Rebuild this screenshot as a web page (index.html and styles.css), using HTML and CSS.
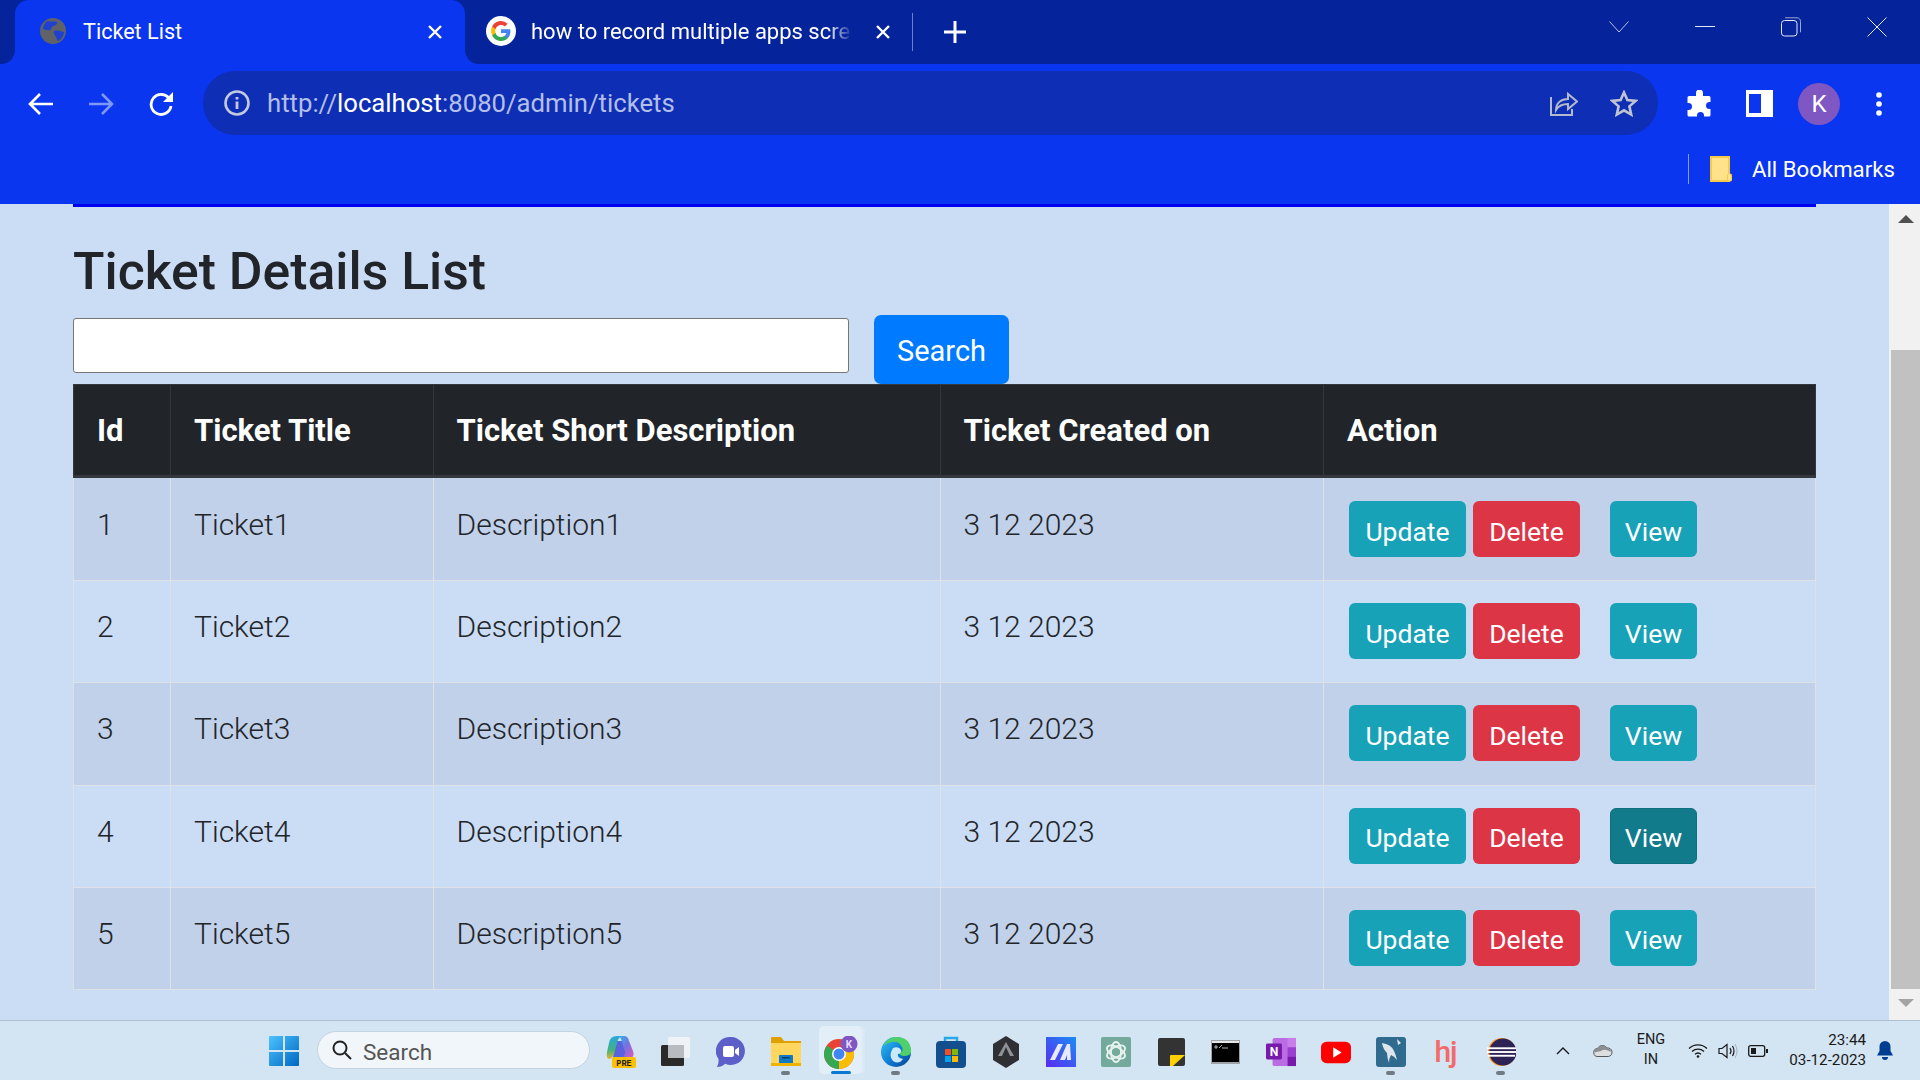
FILE: index.html
```html
<!DOCTYPE html>
<html lang="en">
<head>
<meta charset="utf-8">
<title>Ticket List</title>
<link rel="stylesheet" href="styles.css">
</head>
<body>
<header class="browser">
  <div class="tabstrip">
    <div class="strip-left"></div>
    <div class="tab-wrap">
      <div class="tab-active">
        <svg class="favicon" viewBox="0 0 26 26"><circle cx="13" cy="13" r="13" fill="#5f6368"/><path d="M8 3c3 1 7 0 9 1 1 2-2 4-4 4-2 1-1 3-3 4-3 1-5-1-7-1 0-3 2-7 5-8zM14 13c3-1 6 0 10 1 0 3-2 6-5 9-2 0-2-2-3-4-1-2-3-4-2-6z" fill="#0a36ef" opacity=".75"/></svg>
        <span class="tab-title">Ticket List</span>
        <svg class="tab-close" viewBox="0 0 18 18"><path d="M3 3l12 12M15 3L3 15" stroke="#fff" stroke-width="2.4"/></svg>
      </div>
    </div>
    <div class="strip-rest">
      <div class="tab-second">
        <svg class="g-icon" viewBox="0 0 30 30"><circle cx="15" cy="15" r="15" fill="#fff"/><path d="M24.4 15.2c0-.7-.1-1.400-.2-2H15v3.800h5.300c-.2 1.200-.9 2.300-2 3v2.500h3.200c1.900-1.700 2.900-4.300 2.900-7.300z" fill="#4285f4"/><path d="M15 25c2.700 0 4.900-.9 6.500-2.500l-3.200-2.500c-.9.600-2 1-3.300 1-2.600 0-4.800-1.700-5.500-4.100H6.200v2.600C7.800 22.800 11.200 25 15 25z" fill="#34a853"/><path d="M9.500 16.900c-.4-1.200-.4-2.600 0-3.800v-2.600H6.200a10 10 0 0 0 0 9z" fill="#fbbc05"/><path d="M15 9c1.500 0 2.800.5 3.800 1.500l2.800-2.800A9.700 9.700 0 0 0 15 5c-3.800 0-7.200 2.200-8.800 5.500l3.300 2.600C10.200 10.700 12.400 9 15 9z" fill="#ea4335"/></svg>
        <span class="tab-title-fade">how to record multiple apps scre</span>
        <svg class="tab-close" viewBox="0 0 18 18"><path d="M3 3l12 12M15 3L3 15" stroke="#fff" stroke-width="2.400"/></svg>
      </div>
      <div class="tab-divider"></div>
      <svg class="new-tab" viewBox="0 0 24 24"><path d="M12 1v22M1 12h22" stroke="#fff" stroke-width="3"/></svg>
      <div class="win-controls">
        <svg class="win-ctl" viewBox="0 0 20 12"><path d="M.5.5L10 11 19.500.5" fill="none" stroke="#b9c3e6" stroke-width="1"/></svg>
        <svg class="win-ctl" viewBox="0 0 20 20"><path d="M0 9.500h20" stroke="#e4e8f6" stroke-width="1"/></svg>
        <svg class="win-ctl" viewBox="0 0 20 20"><rect x=".5" y="3.500" width="15.500" height="15.500" rx="3" fill="none" stroke="#e4e8f6"/><path d="M4 .8h12c2 0 3.500 1.500 3.500 3.500v11" fill="none" stroke="#9aa6d6"/></svg>
        <svg class="win-ctl" viewBox="0 0 20 20"><path d="M.5.5l19 19M19.500.5l-19 19" stroke="#e4e8f6" stroke-width="1"/></svg>
      </div>
    </div>
  </div>
  <div class="toolbar">
    <svg class="nav-icon" viewBox="0 0 26 24"><path d="M25 12H3M12 2L2 12l10 10" fill="none" stroke="#fff" stroke-width="2.600"/></svg>
    <svg class="nav-icon" viewBox="0 0 26 24"><path d="M1 12h22M14 2l10 10-10 10" fill="none" stroke="#7f97f7" stroke-width="2.600"/></svg>
    <svg class="nav-icon" viewBox="0 0 26 26"><path d="M21.500 8A10 10 0 1 0 23 15" fill="none" stroke="#fff" stroke-width="2.800"/><path d="M25 1v10H15z" fill="#fff"/></svg>
    <div class="omnibox">
      <svg class="info-icon" viewBox="0 0 26 26"><circle cx="13" cy="13" r="11.500" fill="none" stroke="#c3c9de" stroke-width="2.600"/><path d="M13 11.500v7.500M13 7v2.600" stroke="#c3c9de" stroke-width="2.800"/></svg>
      <span class="url">http://<b class="host">localhost</b>:8080/admin/tickets</span>
      <svg class="share-icon" viewBox="0 0 28 27"><path d="M1 8v18h21v-6" fill="none" stroke="#b4bacb" stroke-width="2"/><path d="M6 21c0-7 5-11 12-11V5l9 7.500-9 7.500v-5c-5 0-9 1-12 6z" fill="none" stroke="#b4bacb" stroke-width="2"/></svg>
      <svg class="star-icon" viewBox="0 0 28 27"><path d="M14 2.500l3.400 7.600 8.100.8-6.100 5.500 1.800 8.100L14 20.300l-7.200 4.200 1.800-8.100-6.100-5.500 8.100-.8z" fill="none" stroke="#c0c4d2" stroke-width="2.600"/></svg>
    </div>
    <svg class="ext-icon" viewBox="0 0 27 27"><path d="M10 3a3.500 3.500 0 0 1 7 0v3h6a1.500 1.500 0 0 1 1.500 1.500V12h-1a3.500 3.500 0 0 0 0 7h1v6a1.500 1.500 0 0 1-1.500 1.500h-5v-1a3.500 3.500 0 0 0-7 0v1H3A1.500 1.500 0 0 1 1.500 25v-5h1a3.500 3.500 0 0 0 0-7h-1V7.500A1.500 1.500 0 0 1 3 6h7z" fill="#fff"/></svg>
    <svg class="panel-icon" viewBox="0 0 27 27"><path d="M0 0h27v27H0zM3 4v19h12V4z" fill="#fff" fill-rule="evenodd"/></svg>
    <div class="avatar">K</div>
    <svg class="menu-icon" viewBox="0 0 6 24"><circle cx="3" cy="3" r="2.800" fill="#fff"/><circle cx="3" cy="12" r="2.800" fill="#fff"/><circle cx="3" cy="21" r="2.800" fill="#fff"/></svg>
  </div>
  <div class="bookmarks">
    <div class="bm-divider"></div>
    <svg class="bm-folder" viewBox="0 0 22 26"><path d="M1 1h18v24H1z" fill="#ffe28a" stroke="#f7c948" stroke-width="2"/><rect x="17.500" y="18" width="4" height="7" rx="1" fill="#ffe28a" stroke="#f7c948"/></svg>
    <span class="bm-label">All Bookmarks</span>
  </div>
</header>

<div class="viewport">
  <main class="page">
    <div class="top-rule"></div>
    <h1 class="title">Ticket Details List</h1>
    <form class="search-row">
      <input class="search-input" type="text" aria-label="Search">
      <button class="btn btn-primary search-btn" type="button">Search</button>
    </form>
    <table class="tickets">
      <colgroup><col class="c-id"><col class="c-title"><col class="c-desc"><col class="c-date"><col class="c-act"></colgroup>
      <thead><tr><th>Id</th><th>Ticket Title</th><th>Ticket Short Description</th><th>Ticket Created on</th><th>Action</th></tr></thead>
      <tbody>
        <tr><td>1</td><td>Ticket1</td><td>Description1</td><td>3 12 2023</td><td class="actions"><button class="btn btn-info">Update</button><button class="btn btn-danger">Delete</button><button class="btn btn-info btn-view">View</button></td></tr>
        <tr><td>2</td><td>Ticket2</td><td>Description2</td><td>3 12 2023</td><td class="actions"><button class="btn btn-info">Update</button><button class="btn btn-danger">Delete</button><button class="btn btn-info btn-view">View</button></td></tr>
        <tr><td>3</td><td>Ticket3</td><td>Description3</td><td>3 12 2023</td><td class="actions"><button class="btn btn-info">Update</button><button class="btn btn-danger">Delete</button><button class="btn btn-info btn-view">View</button></td></tr>
        <tr><td>4</td><td>Ticket4</td><td>Description4</td><td>3 12 2023</td><td class="actions"><button class="btn btn-info">Update</button><button class="btn btn-danger">Delete</button><button class="btn btn-hover btn-view">View</button></td></tr>
        <tr><td>5</td><td>Ticket5</td><td>Description5</td><td>3 12 2023</td><td class="actions"><button class="btn btn-info">Update</button><button class="btn btn-danger">Delete</button><button class="btn btn-info btn-view">View</button></td></tr>
      </tbody>
    </table>
  </main>
  <div class="scrollbar">
    <div class="arrow-up"></div>
    <div class="track"><div class="thumb"></div></div>
    <div class="arrow-down"></div>
  </div>
</div>

<footer class="taskbar">
  <svg class="win-logo" viewBox="0 0 30 30"><defs><linearGradient id="wl" x1="0" y1="0" x2="1" y2="1"><stop offset="0" stop-color="#4cc2ff"/><stop offset="1" stop-color="#0067c0"/></linearGradient></defs><path d="M0 1a1 1 0 0 1 1-1h13v14H0zM16 0h13a1 1 0 0 1 1 1v13H16zM0 16h14v14H1a1 1 0 0 1-1-1zM16 16h14v13a1 1 0 0 1-1 1H16z" fill="url(#wl)"/></svg>
  <div class="tb-search">
    <svg class="tb-search-icon" viewBox="0 0 20 20"><circle cx="8" cy="8" r="6.500" fill="none" stroke="#222" stroke-width="2"/><path d="M13 13l6 6" stroke="#222" stroke-width="2"/></svg>
    <span>Search</span>
  </div>
  <div class="tb-apps">
    <div class="app"><svg class="app-icon" viewBox="0 0 30 32"><defs><linearGradient id="cp" x1="0" y1="0" x2="1" y2="1"><stop offset="0" stop-color="#29b6e8"/><stop offset=".5" stop-color="#7a6fe0"/><stop offset="1" stop-color="#e25bb5"/></linearGradient><linearGradient id="cg" x1="0" y1="0" x2="0" y2="1"><stop offset="0" stop-color="#2aa7e0"/><stop offset=".6" stop-color="#3fb37f"/><stop offset="1" stop-color="#e6b52e"/></linearGradient></defs><path d="M8 5h14l3 12-2 6H7z" fill="#5a63dc"/><path d="M3 7q1-7 8-7h6q-5 1-6 7L8 18q-2 5-5 5-3-1-2-7z" fill="url(#cg)"/><path d="M13 0h5q4 0 5 5l4 10q2 6-3 7h-9q4-1 4-6L16 6q-1-4-3-6z" fill="url(#cp)"/><rect x="6" y="21" width="24" height="11" rx="2" fill="#ffc000"/><text class="pre" x="18" y="30">PRE</text></svg></div>
    <div class="app"><svg class="app-icon" viewBox="0 0 30 30"><rect x="0" y="8" width="23" height="21" rx="1.500" fill="#2a2a2a"/><rect x="7" y="0" width="22" height="21" rx="1.500" fill="#f2f4f6" opacity=".88"/><rect x="7" y="8" width="16" height="13" fill="#b8bcc0"/></svg></div>
    <div class="app"><svg class="app-icon" viewBox="0 0 30 32"><path d="M15 1a14 14 0 1 1-6 26.700Q6 31 1 31q2-3 1.500-8A14 14 0 0 1 15 1z" fill="#5b5fc7"/><rect x="7" y="10" width="11" height="11" rx="2" fill="#fff"/><path d="M19 14l4-3v9l-4-3z" fill="#fff"/></svg></div>
    <div class="app"><svg class="app-icon" viewBox="0 0 30 32"><path d="M0 2a1 1 0 0 1 1-1h9l3 4h17v25H0z" fill="#e0a100"/><path d="M0 7h30v23H0z" fill="#ffd75e"/><rect x="8" y="19" width="14" height="9" rx="1" fill="#0f7ac6"/><rect x="0" y="27" width="30" height="3" fill="#f0b400"/><rect x="11" y="21" width="8" height="1.500" fill="#083e70"/></svg><span class="dot"></span></div>
    <div class="app app-active"><svg class="app-icon" viewBox="0 0 34 34"><circle cx="15" cy="18" r="15" fill="#ea4335"/><path d="M15 18L2 25.500A15 15 0 0 0 15 33z" fill="#34a853"/><path d="M2 25.500A15 15 0 0 1 3 9.500L15 18z" fill="#34a853"/><path d="M15 18l13-7.500A15 15 0 0 1 15 33z" fill="#fbbc05"/><circle cx="15" cy="18" r="7" fill="#fff"/><circle cx="15" cy="18" r="5.500" fill="#4285f4"/><circle cx="25" cy="8" r="8.500" fill="#7e57c2"/><text class="badge-k" x="25" y="11.500">K</text></svg><span class="dot dot-active"></span></div>
    <div class="app"><svg class="app-icon" viewBox="0 0 30 32"><defs><linearGradient id="eg" x1="0" y1="0" x2="1" y2="1"><stop offset="0" stop-color="#35c1f1"/><stop offset=".55" stop-color="#0c7cd5"/><stop offset="1" stop-color="#0a3f8a"/></linearGradient></defs><circle cx="15" cy="16" r="15" fill="url(#eg)"/><path d="M2 10Q8 0 17 1q12 1 13 13 1 6-7 6-4 0-5-3 5-1 3-6-3-6-10-5-6 1-9 4z" fill="#4fd06a"/><path d="M12 12q6-2 8 2 1 3-3 4-1 4 5 5-4 6-10 2-5-5 0-13z" fill="#dff3ff" opacity=".9"/></svg><span class="dot"></span></div>
    <div class="app"><svg class="app-icon" viewBox="0 0 30 32"><path d="M9 6V2h12v4" fill="none" stroke="#2aa7e8" stroke-width="2.500"/><rect y="5" width="30" height="27" rx="4" fill="#134f8f"/><rect x="9" y="13" width="6" height="6" fill="#f25022"/><rect x="16" y="13" width="6" height="6" fill="#7fba00"/><rect x="9" y="20" width="6" height="6" fill="#00a4ef"/><rect x="16" y="20" width="6" height="6" fill="#ffb900"/></svg></div>
    <div class="app"><svg class="app-icon" viewBox="0 0 30 32"><path d="M15 0l13 8v16l-13 8-13-8V8z" fill="#2f3033"/><path d="M15 6l8 14H7z" fill="#8f9296"/><path d="M15 11l-4 9h8z" fill="#2f3033"/></svg></div>
    <div class="app"><svg class="app-icon" viewBox="0 0 30 30"><defs><linearGradient id="mg" x1="0" y1="1" x2="1" y2="0"><stop offset="0" stop-color="#5a2bf0"/><stop offset="1" stop-color="#1b8cf5"/></linearGradient></defs><rect width="30" height="30" fill="url(#mg)"/><path d="M4 23L12 7h5L9 23zM14 23l7-16h3l1 16h-4v-5l-2 5z" fill="#e7e9ff"/></svg></div>
    <div class="app"><svg class="app-icon" viewBox="0 0 30 30"><rect width="30" height="30" rx="2" fill="#74aa9c"/><g fill="none" stroke="#e8f3ef" stroke-width="1.800"><ellipse cx="15" cy="15" rx="10" ry="5" transform="rotate(30 15 15)"/><ellipse cx="15" cy="15" rx="10" ry="5" transform="rotate(90 15 15)"/><ellipse cx="15" cy="15" rx="10" ry="5" transform="rotate(150 15 15)"/></g></svg></div>
    <div class="app"><svg class="app-icon" viewBox="0 0 30 30"><rect x="2" y="1" width="27" height="28" rx="2" fill="#333"/><path d="M14 29V19q0-1 1-1h14L17 29z" fill="#ffd000"/></svg></div>
    <div class="app"><svg class="app-icon" viewBox="0 0 30 30"><rect y="3" width="29" height="24" fill="#9ea3a8"/><rect x="1" y="4" width="27" height="3" fill="#e7e7e7"/><rect x="1" y="6" width="27" height="19" fill="#000"/><path d="M4 9h2v2H4zM8 11l3-3M11 11h6" stroke="#ddd" stroke-width=".8"/></svg></div>
    <div class="app"><svg class="app-icon" viewBox="0 0 32 32"><rect x="7" y="1" width="25" height="30" rx="2" fill="#ba6de2"/><rect x="23" y="1" width="9" height="10" fill="#ca7de8"/><rect x="23" y="11" width="9" height="10" fill="#9a3fd0"/><rect x="23" y="21" width="9" height="10" fill="#7719aa"/><rect y="7" width="17" height="17" rx="1.500" fill="#7719aa"/><text class="onenote" x="8.500" y="20.500">N</text></svg></div>
    <div class="app"><svg class="app-icon" viewBox="0 0 32 30"><rect x="0" y="4" width="32" height="23" rx="6" fill="#f00"/><path d="M13 10l9 5.500-9 5.500z" fill="#fff"/></svg></div>
    <div class="app"><svg class="app-icon" viewBox="0 0 30 32"><rect y="1" width="30" height="30" rx="3" fill="#2f6a8f"/><path d="M6 7q9 1 12 8 2 4 3 9-3-4-6-5-2 3-2 8-2-6-2-10Q7 13 6 7z" fill="#dde6ec"/><path d="M21 3l4 4-3 2z" fill="#dde6ec"/></svg><span class="dot"></span></div>
    <div class="app"><span class="hj">hj</span></div>
    <div class="app"><svg class="app-icon" viewBox="0 0 32 32"><circle cx="17" cy="16" r="15" fill="#f7941e"/><circle cx="18" cy="16" r="14.500" fill="#2c2255"/><rect x="1" y="11" width="31" height="2" fill="#fff"/><rect x="1" y="15" width="31" height="2" fill="#fff"/><rect x="2" y="19" width="29" height="2" fill="#fff"/></svg><span class="dot"></span></div>
  </div>
  <div class="tray">
    <svg class="tray-chev" viewBox="0 0 14 8"><path d="M1 7l6-6 6 6" fill="none" stroke="#1a1a1a" stroke-width="1.400"/></svg>
    <svg class="tray-cloud" viewBox="0 0 20 13"><path d="M5 12.500a4 4 0 0 1-.5-8A5.500 5.500 0 0 1 14 4a4.300 4.300 0 0 1 1.500 8.500z" fill="#dcdedf" stroke="#55585b"/><path d="M1.200 8.500Q1.500 5 4.500 4.500A5.500 5.500 0 0 1 14 4q3 .3 4.500 4l-5-2q-3-1-5.500 1z" fill="#8c8f92"/></svg>
    <div class="tray-lang"><span>ENG</span><span>IN</span></div>
    <svg class="tray-wifi" viewBox="0 0 20 15"><path d="M1 5.500a13 13 0 0 1 18 0M4 8.500a9 9 0 0 1 12 0M7 11.300a4.500 4.500 0 0 1 6 0" fill="none" stroke="#1a1a1a" stroke-width="1.300"/><circle cx="10" cy="13.500" r="1.300" fill="#1a1a1a"/></svg>
    <svg class="tray-vol" viewBox="0 0 20 16"><path d="M1 5.500h3l5-4v13l-5-4H1z" fill="none" stroke="#1a1a1a" stroke-width="1.200"/><path d="M12 5q2 3 0 6M14.500 3q3 5 0 10" fill="none" stroke="#1a1a1a" stroke-width="1.200"/><path d="M17 1q4 7 0 14" fill="none" stroke="#a7b4bf"/></svg>
    <svg class="tray-batt" viewBox="0 0 20 12"><rect x=".7" y=".7" width="16" height="10.600" rx="2" fill="none" stroke="#1a1a1a" stroke-width="1.300"/><rect x="3" y="3" width="5" height="6" fill="#1a1a1a"/><rect x="18" y="4" width="2" height="4" fill="#1a1a1a"/></svg>
    <div class="clock"><span>23:44</span><span>03-12-2023</span></div>
    <svg class="tray-bell" viewBox="0 0 16 20"><path d="M8 0a5.500 5.500 0 0 1 5.500 5.500V10l2.500 4.500H0L2.500 10V5.500A5.500 5.500 0 0 1 8 0z" fill="#003e92"/><path d="M5 16h6a3 3 0 0 1-6 0z" fill="#003e92"/></svg>
  </div>
</footer>
</body>
</html>
```

FILE: styles.css
```css
* { box-sizing: border-box; }
html, body { margin: 0; height: 100%; }
body {
  width: 1920px; height: 1080px; overflow: hidden;
  display: flex; flex-direction: column;
  font-family: Roboto, "Noto Sans", sans-serif;
  color: #212529; background: #cbdcf5;
}
svg { display: block; flex: none; }

/* browser chrome */
.browser { height: 204px; flex: none; background: #0a36ef; }
.tabstrip { height: 64px; display: flex; }
.strip-left { width: 15px; background: #05239b; border-bottom-right-radius: 14px; }
.tab-wrap { width: 450px; background: #05239b; }
.tab-active {
  height: 64px; background: #0a36ef; border-radius: 14px 14px 0 0;
  display: flex; align-items: center; padding: 0 21px 0 25px; color: #fff;
}
.favicon { width: 26px; height: 26px; margin-top: -2px; }
.tab-title { margin-left: 17px; font-size: 21.600px; flex: 1; margin-top: -2px; }
.tab-close { width: 18px; height: 18px; }
.strip-rest {
  flex: 1; background: #05239b; border-bottom-left-radius: 14px;
  display: flex; align-items: center; padding-left: 21px;
}
.tab-second { width: 426px; display: flex; align-items: center; color: #fff; }
.g-icon { width: 30px; height: 30px; margin-top: -2px; }
.tab-title-fade {
  margin-left: 15px; width: 322px; margin-right: 21px; font-size: 22px; white-space: nowrap; overflow: hidden; margin-top: -2px;
  -webkit-mask-image: linear-gradient(90deg, #000 92%, transparent);
  mask-image: linear-gradient(90deg, #000 92%, transparent);
}
.tab-divider { width: 1px; height: 38px; background: #6d80c8; }
.new-tab { width: 24px; height: 24px; margin-left: 30px; }
.win-controls { margin-left: auto; display: flex; align-items: center; padding-right: 33px; margin-top: -10px; }
.win-ctl { width: 20px; height: 20px; margin-left: 66px; }
.win-ctl:first-child { height: 12px; margin-left: 0; }

.toolbar { height: 71px; padding-top: 7px; display: flex; align-items: flex-start; padding-left: 28px; }
.nav-icon { width: 26px; height: 26px; margin: 20px 34px 0 0; }
.omnibox {
  width: 1455px; height: 64px; margin-left: -5px; background: #0e2fb5; border-radius: 32px;
  display: flex; align-items: center; padding: 0 20px 0 21px;
}
.info-icon { width: 26px; height: 26px; }
.url { margin-left: 17px; font-size: 25.700px; color: #b3bfe8; flex: 1; }
.host { font-weight: 400; color: #fff; }
.share-icon { width: 28px; height: 27px; margin: -2px 32px 0 0; }
.star-icon { width: 28px; height: 27px; }
.ext-icon { width: 27px; height: 27px; margin: 19px 0 0 28px; }
.panel-icon { width: 27px; height: 27px; margin: 19px 0 0 33px; }
.avatar {
  width: 42px; height: 42px; border-radius: 50%; margin: 12px 0 0 25px;
  background: #7e57c2; color: #fff; font-size: 24px;
  display: flex; align-items: center; justify-content: center;
}
.menu-icon { width: 6px; height: 24px; margin: 21px 0 0 36px; }

.bookmarks { height: 69px; display: flex; align-items: center; padding: 0 0 2px 1688px; }
.bm-divider { width: 1px; height: 30px; flex: none; background: #8a9cf0; }
.bm-folder { width: 22px; height: 26px; margin-left: 21px; }
.bm-label { margin-left: 20px; font-size: 22.200px; color: #fff; white-space: nowrap; }

/* page */
.viewport { flex: 1; min-height: 0; display: flex; }
.page { flex: 1; padding: 0 73px; }
.top-rule { height: 3px; background: #0000f0; }
.title { margin: 34px 0 0; font-size: 51.700px; line-height: 62px; font-weight: 500; }
.search-row { display: flex; align-items: flex-start; margin-top: 12px; height: 69px; }
.search-input {
  width: 776px; height: 55px; margin-top: 3px; background: #fff; border: 1px solid #767676; border-radius: 3px;
}
.btn {
  height: 56px; border: 0; border-radius: 6px; color: #fff; font-family: inherit;
  font-size: 26.500px; padding: 4px 0 0; cursor: pointer;
}
.search-btn { margin-left: 25px; width: 135px; height: 69px; border-radius: 7px; font-size: 29px; padding-top: 3px; }
.btn-primary { background: #007bff; }
.btn-info { background: #17a2b8; }
.btn-danger { background: #dc3545; }
.btn-hover { background: #117a8b; border: 1px solid #10707f; }

.tickets { width: 1742px; table-layout: fixed; border-collapse: collapse; font-size: 30px; }
.c-id { width: 97px; }
.c-title { width: 262.500px; }
.c-desc { width: 507px; }
.c-date { width: 383.500px; }
.c-act { width: 492px; }
.tickets th {
  height: 92px; background: #212529; color: #fff; text-align: left; font-weight: 700; font-size: 31px;
  padding: 0 23px; border: 1px solid #32383e; border-bottom: 3px solid #32383e;
}
.tickets td {
  height: 102.200px; padding: 23px; vertical-align: top; border: 1px solid #dee2e6;
  line-height: 46px; font-weight: 300;
}
.tickets tbody tr:nth-child(odd) td { background: #c1d1e9; }
.tickets tbody tr:first-child td { height: 104.200px; padding-top: 24px; }
.tickets td.actions { padding: 22px 25px 0; font-size: 0; line-height: 0; }
.tickets tbody tr:first-child td.actions { padding-top: 23px; }
.actions .btn { vertical-align: top; width: 117px; margin-right: 7px; }
.actions .btn-danger { width: 107px; }
.actions .btn-view { width: 87px; margin-left: 23px; margin-right: 0; }

/* scrollbar */
.scrollbar { width: 31px; flex: none; background: #f1f1f1; display: flex; flex-direction: column; align-items: flex-end; }
.arrow-up, .arrow-down { width: 29px; height: 31px; flex: none; }
.arrow-up::after, .arrow-down::after {
  content: ""; display: block; width: 0; margin: 11px auto 0;
  border-left: 8px solid transparent; border-right: 8px solid transparent;
}
.arrow-up::after { border-bottom: 8px solid #505050; }
.arrow-down::after { border-top: 8px solid #a3a3a3; margin-top: 10px; }
.track { flex: 1; width: 29px; display: flex; flex-direction: column; justify-content: flex-end; }
.thumb { height: 639px; background: #c1c1c1; }

/* taskbar */
.taskbar {
  height: 60px; flex: none; background: #d3e4f2; border-top: 1px solid #b0c0ce;
  display: flex; align-items: flex-start; padding-left: 269px; color: #1a1a1a;
}
.win-logo { width: 30px; height: 30px; margin-top: 15px; }
.tb-search {
  width: 273px; height: 38px; margin: 10px 0 0 18px; background: #f1f6fb; border: 1px solid #c3d3e0;
  border-radius: 19px; display: flex; align-items: center; padding-left: 14px; font-size: 22.500px; color: #555;
}
.tb-search span { margin-top: 3px; }
.tb-search-icon { width: 20px; height: 20px; margin-right: 11px; }
.tb-apps { display: flex; margin-left: 3px; }
.app { width: 55px; height: 59px; display: flex; flex-direction: column; align-items: center; padding-top: 15px; }
.app-icon { width: 30px; height: 32px; }
.app-active { margin: 5px 6px 0; width: 43px; height: 48px; padding-top: 10px; background: #e3eff8; border-radius: 5px; box-shadow: 3px 0 0 #dbe9f4; }
.app-active .app-icon { width: 34px; height: 34px; }
.dot { width: 9px; height: 4px; margin-top: 3px; border-radius: 2px; background: #6f7a84; }
.dot-active { width: 20px; background: #0a78d4; }
.app-active .dot-active { margin-top: 1px; }
.pre { font: 700 8.500px "Liberation Mono", monospace; text-anchor: middle; fill: #222; }
.badge-k { font: 700 10px Roboto, sans-serif; text-anchor: middle; fill: #e8dcff; }
.onenote { font: 700 13px Roboto, sans-serif; text-anchor: middle; fill: #fff; }
.hj { font: 500 30px/32px Roboto, sans-serif; color: #f36a6a; letter-spacing: -1px; }

.tray { margin-left: 28px; display: flex; align-items: center; height: 59px; font-size: 14.500px; }
.tray-chev { width: 14px; height: 8px; }
.tray-cloud { width: 20px; height: 13px; margin-left: 23px; }
.tray-lang { width: 40px; margin-left: 18px; display: flex; flex-direction: column; align-items: center; line-height: 20px; margin-top: -2px; }
.tray-wifi { width: 20px; height: 15px; margin-left: 17px; }
.tray-vol { width: 20px; height: 16px; margin-left: 10px; }
.tray-batt { width: 20px; height: 12px; margin-left: 10px; }
.clock { width: 78px; margin-left: 20px; display: flex; flex-direction: column; align-items: flex-end; line-height: 20px; white-space: nowrap; font-size: 15.200px; margin-top: -2px; }
.tray-bell { width: 16px; height: 20px; margin-left: 11px; }
```
